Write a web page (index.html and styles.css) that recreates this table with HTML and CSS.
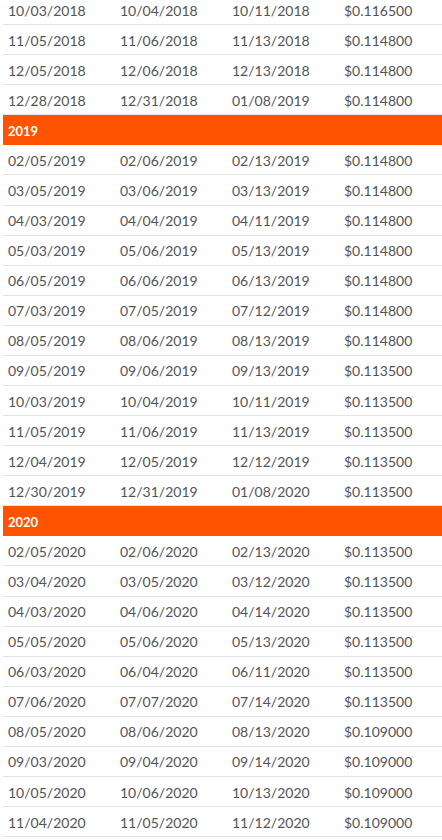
FILE: index.html
```html
<!DOCTYPE html>
<html>
<head>
<meta charset="utf-8">
<link rel="stylesheet" href="styles.css">
</head>
<body>
<div class="table">
  <div class="row"><span>10/03/2018</span><span>10/04/2018</span><span>10/11/2018</span><span>$0.116500</span></div>
  <div class="row"><span>11/05/2018</span><span>11/06/2018</span><span>11/13/2018</span><span>$0.114800</span></div>
  <div class="row"><span>12/05/2018</span><span>12/06/2018</span><span>12/13/2018</span><span>$0.114800</span></div>
  <div class="row"><span>12/28/2018</span><span>12/31/2018</span><span>01/08/2019</span><span>$0.114800</span></div>
  <div class="year">2019</div>
  <div class="row"><span>02/05/2019</span><span>02/06/2019</span><span>02/13/2019</span><span>$0.114800</span></div>
  <div class="row"><span>03/05/2019</span><span>03/06/2019</span><span>03/13/2019</span><span>$0.114800</span></div>
  <div class="row"><span>04/03/2019</span><span>04/04/2019</span><span>04/11/2019</span><span>$0.114800</span></div>
  <div class="row"><span>05/03/2019</span><span>05/06/2019</span><span>05/13/2019</span><span>$0.114800</span></div>
  <div class="row"><span>06/05/2019</span><span>06/06/2019</span><span>06/13/2019</span><span>$0.114800</span></div>
  <div class="row"><span>07/03/2019</span><span>07/05/2019</span><span>07/12/2019</span><span>$0.114800</span></div>
  <div class="row"><span>08/05/2019</span><span>08/06/2019</span><span>08/13/2019</span><span>$0.114800</span></div>
  <div class="row"><span>09/05/2019</span><span>09/06/2019</span><span>09/13/2019</span><span>$0.113500</span></div>
  <div class="row"><span>10/03/2019</span><span>10/04/2019</span><span>10/11/2019</span><span>$0.113500</span></div>
  <div class="row"><span>11/05/2019</span><span>11/06/2019</span><span>11/13/2019</span><span>$0.113500</span></div>
  <div class="row"><span>12/04/2019</span><span>12/05/2019</span><span>12/12/2019</span><span>$0.113500</span></div>
  <div class="row"><span>12/30/2019</span><span>12/31/2019</span><span>01/08/2020</span><span>$0.113500</span></div>
  <div class="year">2020</div>
  <div class="row"><span>02/05/2020</span><span>02/06/2020</span><span>02/13/2020</span><span>$0.113500</span></div>
  <div class="row"><span>03/04/2020</span><span>03/05/2020</span><span>03/12/2020</span><span>$0.113500</span></div>
  <div class="row"><span>04/03/2020</span><span>04/06/2020</span><span>04/14/2020</span><span>$0.113500</span></div>
  <div class="row"><span>05/05/2020</span><span>05/06/2020</span><span>05/13/2020</span><span>$0.113500</span></div>
  <div class="row"><span>06/03/2020</span><span>06/04/2020</span><span>06/11/2020</span><span>$0.113500</span></div>
  <div class="row"><span>07/06/2020</span><span>07/07/2020</span><span>07/14/2020</span><span>$0.113500</span></div>
  <div class="row"><span>08/05/2020</span><span>08/06/2020</span><span>08/13/2020</span><span>$0.109000</span></div>
  <div class="row"><span>09/03/2020</span><span>09/04/2020</span><span>09/14/2020</span><span>$0.109000</span></div>
  <div class="row"><span>10/05/2020</span><span>10/06/2020</span><span>10/13/2020</span><span>$0.109000</span></div>
  <div class="row"><span>11/04/2020</span><span>11/05/2020</span><span>11/12/2020</span><span>$0.109000</span></div>
</div>
</body>
</html>
```
FILE: styles.css
```css
html, body {
  margin: 0;
  padding: 0;
  background: #ffffff;
  overflow: hidden;
}
body {
  font-family: Lato, "Liberation Sans", sans-serif;
  color: #525357;
}
.table {
  margin-top: -5px;
  margin-left: 3px;
  width: 448px;
}
.row {
  display: grid;
  grid-template-columns: 112px 112px 112px 112px;
  align-items: center;
  box-sizing: border-box;
  height: 30.08px;
  padding-top: 1px;
  border-bottom: 1px solid #e3e3e3;
  font-size: 14px;
}
.row span {
  padding-left: 5px;
  white-space: nowrap;
}
.year {
  box-sizing: border-box;
  height: 30.08px;
  display: flex;
  align-items: center;
  padding-left: 5px;
  padding-top: 1px;
  background: #fe5300;
  color: #ffffff;
  font-weight: bold;
  font-size: 13px;
}
```
